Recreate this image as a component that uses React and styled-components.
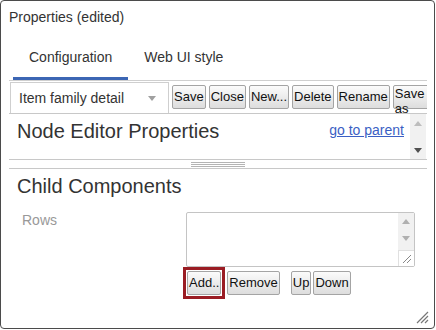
import styled, { createGlobalStyle } from 'styled-components';

const GlobalStyle = createGlobalStyle`
  body {
    margin: 0;
    background: #fff;
    font-family: 'Liberation Sans', Arial, sans-serif;
  }
`;

const Arrow = ({ down, color }) => (
  <svg width='8' height='5' viewBox='0 0 8 5'>
    <path d={down ? 'M0 0 H8 L4 5 Z' : 'M0 5 H8 L4 0 Z'} fill={color} />
  </svg>
);

const App = () => {
  return (
    <>
      <GlobalStyle />
      <Window>
        <Title>Properties (edited)</Title>
        <Body>
          <TabStrip>
            <Tab $active>Configuration</Tab>
            <Tab>Web UI style</Tab>
          </TabStrip>
          <Toolbar>
            <Dropdown>
              <span>Item family detail</span>
              <Arrow down color='#a0a0a0' />
            </Dropdown>
            <Button>Save</Button>
            <Button>Close</Button>
            <Button>New...</Button>
            <Button>Delete</Button>
            <Button>Rename</Button>
            <Button $wrap>Save as</Button>
          </Toolbar>
          <Panel>
            <Heading>Node Editor Properties</Heading>
            <ParentLink href='#'>go to parent</ParentLink>
            <ScrollBar>
              <ScrollButton>
                <Arrow color='#bdbdbd' />
              </ScrollButton>
              <ScrollButton>
                <Arrow down color='#505050' />
              </ScrollButton>
            </ScrollBar>
          </Panel>
          <Splitter>
            <Grip />
          </Splitter>
          <Section>
            <Heading>Child Components</Heading>
            <FieldRow>
              <Label>Rows</Label>
              <ListBox>
                <ListBody />
                <ListScroll>
                  <ScrollButton $small>
                    <Arrow color='#b0b0b0' />
                  </ScrollButton>
                  <ScrollButton $small>
                    <Arrow down color='#b0b0b0' />
                  </ScrollButton>
                  <Resizer>
                    <svg width='10' height='10' viewBox='0 0 10 10'>
                      <path d='M1 9 L9 1 M5 9 L9 5' stroke='#888' strokeWidth='1' />
                    </svg>
                  </Resizer>
                </ListScroll>
              </ListBox>
            </FieldRow>
            <ButtonRow>
              <FocusBox>
                <Button>Add..</Button>
              </FocusBox>
              <Button>Remove</Button>
              <Spacer />
              <Button>Up</Button>
              <Button>Down</Button>
            </ButtonRow>
          </Section>
        </Body>
        <WindowGrip>
          <svg width='14' height='14' viewBox='0 0 14 14'>
            <path d='M2 13 L13 2 M6 13 L13 6 M10 13 L13 10' stroke='#777' strokeWidth='1.2' />
          </svg>
        </WindowGrip>
      </Window>
    </>
  );
};
export default App;

const Window = styled.div`
  position: relative;
  box-sizing: border-box;
  width: 435px;
  height: 329px;
  border: 1px solid #4b4b4b;
  border-radius: 4px;
  background: #fff;
  overflow: hidden;
  color: #333;
`;

const Title = styled.div`
  height: 32px;
  line-height: 32px;
  padding-left: 8px;
  font-size: 14px;
  color: #333;
`;

const Body = styled.div`
  margin-left: 8px;
  width: 418px;
`;

const TabStrip = styled.div`
  display: flex;
  padding: 4px 0 0 4px;
  border-bottom: 1px solid #cfcfcf;
`;

const Tab = styled.div`
  height: 40px;
  line-height: 40px;
  padding: 0 16px;
  font-size: 14px;
  color: #333;
  border-bottom: 3px solid ${(p) => (p.$active ? '#3c66b4' : 'transparent')};
`;

const Toolbar = styled.div`
  display: flex;
  align-items: center;
  gap: 3px;
  height: 32px;
  border-bottom: 1px solid #c8c8c8;
  overflow: hidden;
`;

const Dropdown = styled.div`
  align-self: flex-end;
  box-sizing: border-box;
  display: flex;
  align-items: center;
  justify-content: space-between;
  width: 159px;
  height: 31px;
  margin-left: 1px;
  padding: 0 12px 0 8px;
  border: 1px solid #cfcfcf;
  border-bottom: none;
  font-size: 14px;
  color: #333;
  flex-shrink: 0;
`;

const Button = styled.button`
  box-sizing: border-box;
  flex-shrink: 0;
  height: 24px;
  padding: 0 1px;
  border: 1px solid #a4a4a4;
  border-radius: 2px;
  background: linear-gradient(#fbfbfb, #dddddd);
  font-family: 'Liberation Sans', Arial, sans-serif;
  font-size: 13px;
  line-height: ${(p) => (p.$wrap ? '15px' : '22px')};
  color: #111;
  white-space: ${(p) => (p.$wrap ? 'normal' : 'nowrap')};
  width: ${(p) => (p.$wrap ? '36px' : 'auto')};
  text-align: ${(p) => (p.$wrap ? 'left' : 'center')};
  overflow: visible;
`;

const Panel = styled.div`
  display: flex;
  align-items: flex-start;
  height: 45px;
  padding-left: 8px;
  border-bottom: 1px solid #c8c8c8;
`;

const Heading = styled.div`
  font-size: 20px;
  line-height: 24px;
  color: #333;
  padding-top: 5px;
`;

const ParentLink = styled.a`
  margin: 8px 6px 0 auto;
  font-size: 14px;
  line-height: 16px;
  color: #3b5fc4;
  text-decoration: underline;
`;

const ScrollBar = styled.div`
  display: flex;
  flex-direction: column;
  justify-content: space-between;
  align-self: stretch;
  width: 16px;
  margin-right: 1px;
  background: #f1f1f1;
`;

const ScrollButton = styled.div`
  display: flex;
  align-items: center;
  justify-content: center;
  height: ${(p) => (p.$small ? '17px' : '18px')};
`;

const Splitter = styled.div`
  display: flex;
  justify-content: center;
  align-items: center;
  height: 8px;
  border-bottom: 1px solid #c8c8c8;
`;

const Grip = styled.div`
  width: 54px;
  height: 5px;
  background: repeating-linear-gradient(#b4b4b4 0 1px, transparent 1px 2px);
`;

const Section = styled.div`
  padding-left: 8px;
`;

const FieldRow = styled.div`
  display: flex;
  margin-top: 14px;
`;

const Label = styled.div`
  box-sizing: border-box;
  width: 169px;
  padding-left: 5px;
  font-size: 14px;
  line-height: 16px;
  color: #999;
`;

const ListBox = styled.div`
  box-sizing: border-box;
  display: flex;
  width: 229px;
  height: 55px;
  border: 1px solid #c4c4c4;
  border-radius: 2px;
`;

const ListBody = styled.div`
  flex: 1;
`;

const ListScroll = styled.div`
  display: flex;
  flex-direction: column;
  width: 16px;
  background: #f1f1f1;
`;

const Resizer = styled.div`
  margin-top: auto;
  height: 16px;
  display: flex;
  align-items: flex-end;
  justify-content: flex-end;
  padding: 0 2px 2px 0;
  box-sizing: border-box;
  background: #fff;
  border-top: 1px solid #e0e0e0;
  border-left: 1px solid #e0e0e0;
`;

const ButtonRow = styled.div`
  display: flex;
  align-items: center;
  gap: 2px;
  margin-left: 166px;
`;

const FocusBox = styled.div`
  display: flex;
  padding: 1px;
  border: 3px solid #9a1c23;
`;

const Spacer = styled.div`
  width: 7px;
`;

const WindowGrip = styled.div`
  position: absolute;
  right: 5px;
  bottom: 4px;
  width: 14px;
  height: 14px;
`;
